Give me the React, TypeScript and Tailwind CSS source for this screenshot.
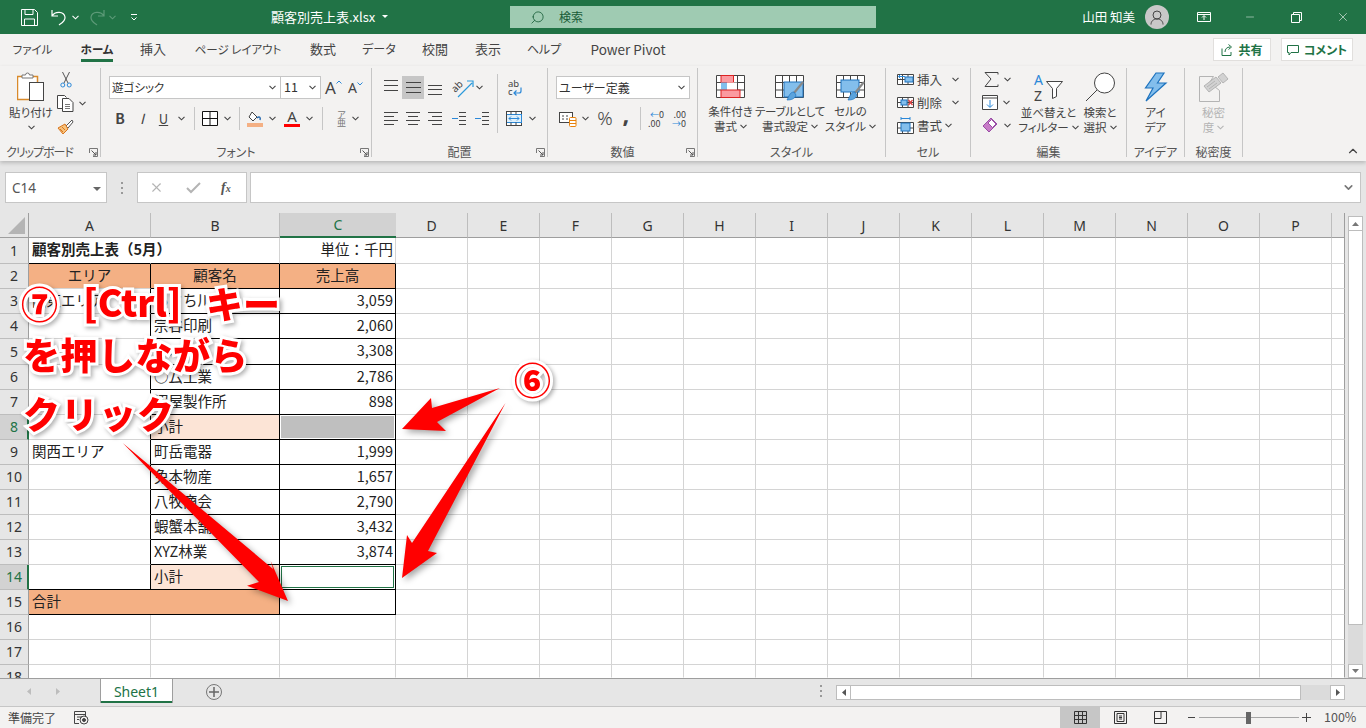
import type { ReactNode } from "react";
import { ChevronDown, ChevronUp, Minus, Search, X } from "lucide-react";

const jp = "font-['Noto_Sans_CJK_JP','Noto_Sans',sans-serif]";
const palt = "[font-feature-settings:'palt']";

const RED = "#ff0000";
const GR = "border-r-[#d4d4d4]";
const BR = "border-r-black";
const NR = "border-r-transparent";
const GB = "border-b-[#d4d4d4]";
const BB = "border-b-black";
const CELL = "flex items-center whitespace-nowrap border-r border-b text-[14.5px] leading-none text-[#222]";
const ORANGE = "bg-[#f4b084]";
const PEACH = "bg-[#fce4d6]";

const cols = ["A", "B", "C", "D", "E", "F", "G", "H", "I", "J", "K", "L", "M", "N", "O", "P"];
const rowNums = Array.from({ length: 18 }, (_, i) => i + 1);

// small chevron used all over the ribbon
function Chev({ color = "#444", className = "" }: { color?: string; className?: string }) {
  return (
    <svg width="7" height="5" viewBox="0 0 7 5" className={`shrink-0 ${className}`}>
      <path d="M.5 .8l3 3 3-3" fill="none" stroke={color} strokeWidth="1.1" />
    </svg>
  );
}

function Launcher() {
  return (
    <svg width="9" height="9" viewBox="0 0 9 9">
      <path d="M.5 5V.5H8.500M8.500 .5V8.500H4" fill="none" stroke="#777" />
      <path d="M2.500 2.500L7 7M7 4v3H4" fill="none" stroke="#555" />
    </svg>
  );
}

function Group({ w, label, launcher, children, labelClass = "" }: { w: string; label: string; launcher?: boolean; children: ReactNode; labelClass?: string }) {
  return (
    <div className={`${w} flex h-[89px] shrink-0 flex-col border-r border-[#c6c6c6]`}>
      <div className="flex h-[78px]">{children}</div>
      <div className="grid h-[11px] grid-cols-[1fr_auto_1fr] items-center">
        <span />
        <span className={`whitespace-nowrap text-[12px] leading-none text-[#555] ${labelClass}`}>{label}</span>
        <span className="flex justify-end pr-[2px]">{launcher && <Launcher />}</span>
      </div>
    </div>
  );
}

function Lines({ rows, w = 15, h = 15 }: { rows: [number, number, number, string?][]; w?: number; h?: number }) {
  return (
    <svg width={w} height={h} viewBox={`0 0 ${w} ${h}`}>
      {rows.map(([a, b, y, c], i) => (
        <path key={i} d={`M${a} ${y + 0.5}H${b}`} stroke={c || "#444"} />
      ))}
    </svg>
  );
}

function Paste() {
  return (
    <svg width="28" height="31" viewBox="0 0 28 31">
      <rect x=".5" y="4.500" width="20" height="23" fill="#fff" stroke="#d98a2b" strokeWidth="1.500" />
      <path d="M5 5V3h3.500a2 2 0 0 1 4 0H16v3H5z" fill="#fff" stroke="#777" />
      <rect x="12.500" y="10.500" width="14" height="18" fill="#fff" stroke="#444" />
    </svg>
  );
}

function Scissors() {
  return (
    <svg width="12" height="17" viewBox="0 0 12 17">
      <path d="M2.500 1L8 12M9.500 1L4 12" stroke="#555" fill="none" />
      <circle cx="2.800" cy="14" r="2" fill="none" stroke="#2b88d8" />
      <circle cx="9.200" cy="14" r="2" fill="none" stroke="#2b88d8" />
    </svg>
  );
}

function Copy() {
  return (
    <svg width="18" height="17" viewBox="0 0 18 17">
      <path d="M7 13.500H.5V.5h7l2 2" fill="#fff" stroke="#444" />
      <path d="M5.500 3.500H12l4 4v9H5.500z" fill="#fff" stroke="#444" />
      <path d="M8 9.500h5M8 11.500h5M8 13.500h5" stroke="#777" />
    </svg>
  );
}

function Brush() {
  return (
    <svg width="17" height="16" viewBox="0 0 17 16">
      <path d="M11 5l-2 2 2 2 5-6-1-2z" fill="#fff" stroke="#555" />
      <path d="M8 5L1 9l5 6 5-5z" fill="#f7c27c" stroke="#d9761e" />
      <path d="M3 10l3 3M5 8l3 3" stroke="#d9761e" />
    </svg>
  );
}

function GrowA({ down, size }: { down?: boolean; size: string }) {
  return (
    <span className="flex items-start text-[#444]">
      <span className={`${size} leading-none font-['Noto_Sans',sans-serif]`}>A</span>
      <svg width="6" height="4" viewBox="0 0 6 4" className="mt-[1px]">
        <path d={down ? "M.5 .5l2.500 2.500 2.500-2.500" : "M.5 3.500l2.500-2.500 2.500 2.500"} fill="none" stroke="#2b88d8" />
      </svg>
    </span>
  );
}

function Fill() {
  return (
    <svg width="16" height="17" viewBox="0 0 16 17">
      <path d="M5 2l5 5-4 4-4-4z" fill="#fff" stroke="#444" />
      <path d="M10 8c2-2 4-1 3 2" fill="none" stroke="#2b6cb0" strokeWidth="1.500" />
      <rect y="13" width="16" height="4" fill="#f4b084" />
    </svg>
  );
}

function FontColor() {
  return (
    <span className="flex h-[17px] w-[16px] flex-col items-center">
      <span className="h-[13px] text-[15px] leading-[13px] text-[#444] font-['Noto_Sans',sans-serif]">A</span>
      <span className="mt-[1px] h-[3px] w-[16px] bg-[#ff0000]" />
    </span>
  );
}

function Orient() {
  return (
    <svg width="22" height="20" viewBox="0 0 22 20" className="overflow-visible">
      <text x="-1" y="11" fontSize="10" fill="#444" transform="rotate(-45 6 8)" fontFamily="Noto Sans">ab</text>
      <path d="M6 19L20 5M15 3h6v6" fill="none" stroke="#2b9adb" strokeWidth="1.200" />
    </svg>
  );
}

function Wrap() {
  return (
    <svg width="16" height="16" viewBox="0 0 16 16" className="overflow-visible">
      <text x="1" y="7" fontSize="9.500" fill="#444" fontFamily="Noto Sans">ab</text>
      <text x="1" y="15" fontSize="9.500" fill="#444" fontFamily="Noto Sans">c</text>
      <path d="M14 7.500V11a2 2 0 0 1-2 2H7M9.500 10.500L7 13l2.500 2.500" fill="none" stroke="#2b88d8" strokeWidth="1.200" />
    </svg>
  );
}

function Merge() {
  return (
    <svg width="16" height="15" viewBox="0 0 16 15">
      <rect x=".5" y=".5" width="15" height="14" fill="#fff" stroke="#444" />
      <rect x=".5" y="3.500" width="15" height="8" fill="#dff0fb" stroke="#2b88d8" />
      <path d="M.5 .5v14M5 .5v3M10 .5v3M5 11.500v3M10 11.500v3" stroke="#444" />
      <path d="M3 7.500h10M5 5.500l-2 2 2 2M11 5.500l2 2-2 2" fill="none" stroke="#2b88d8" />
    </svg>
  );
}

function Currency() {
  return (
    <svg width="18" height="16" viewBox="0 0 18 16">
      <rect x=".5" y="1.500" width="13" height="10" fill="#fff" stroke="#444" />
      <path d="M3 5h2M3 8h2M7 5h2M7 8h2" stroke="#444" />
      <rect x="10.500" y="6.500" width="6.500" height="9" rx="1" fill="#fff" stroke="#e8820c" />
      <path d="M10.500 9.500h6.500M10.500 12.500h6.500" stroke="#e8820c" />
    </svg>
  );
}

function TableIcon({ kind }: { kind: 0 | 1 | 2 }) {
  const grid = "M.5 .5H28.500V22.500H.5zM.5 7.500H28.500M.5 15H28.500M7.500 .5V22.500M14.500 .5V22.500M21.500 .5V22.500";
  return (
    <svg width="30" height="26" viewBox="0 0 30 26">
      <rect width="29" height="23" fill="#fff" />
      <path d={grid} fill="none" stroke="#444" strokeWidth="1" />
      {kind === 0 && (
        <>
          <rect x="5" y=".5" width="12.500" height="7" fill="#fb9aa0" stroke="#d22" />
          <rect x="5" y="7.500" width="6" height="7.500" fill="#83beec" />
          <rect x="11" y="7.500" width="10" height="7.500" fill="#fff" />
          <rect x="5" y="15" width="19" height="7.500" fill="#fb9aa0" stroke="#d22" />
        </>
      )}
      {kind === 1 && <rect x="9" y="7" width="19" height="15" fill="#83beec" stroke="#1e73be" />}
      {kind === 2 && <rect x="5" y="5" width="18" height="12" fill="#83beec" stroke="#1e73be" />}
      {kind !== 0 && (
        <>
          <path d="M28 7L19 18" stroke="#888" strokeWidth="2.200" />
          <path d="M19 17c-4 0-5 4-7 8 4 0 8-1 9-5z" fill="#5ba3dd" stroke="#1e73be" strokeWidth=".7" />
        </>
      )}
    </svg>
  );
}

function CellIcon({ kind }: { kind: 0 | 1 | 2 }) {
  return (
    <svg width="17" height="17" viewBox="0 0 17 17">
      {kind !== 2 && <path d="M.5 3.500h16v10H.5zM.5 8.500h16M5.500 3.500v10M11 3.500v10" fill="#fff" stroke="#444" />}
      {kind === 0 && (
        <>
          <rect x="8" y="6" width="8" height="5" fill="#83beec" stroke="#1e73be" />
          <path d="M8 5.500H1.500M3.500 3.500l-2 2 2 2" fill="none" stroke="#2b88d8" />
        </>
      )}
      {kind === 1 && (
        <>
          <rect x="4" y="6" width="6" height="5" fill="#83beec" stroke="#1e73be" />
          <path d="M11.500 6l4 5M15.500 6l-4 5" stroke="#e04343" strokeWidth="1.300" />
        </>
      )}
      {kind === 2 && (
        <>
          <path d="M.5 5.500h16v11H.5zM.5 11h16M5.500 5.500v11M11 5.500v11" fill="#fff" stroke="#444" />
          <rect x="4" y="6" width="9" height="8" fill="#83beec" stroke="#1e73be" />
          <path d="M4 1.500h9M4 0v3M13 0v3" stroke="#2b88d8" />
        </>
      )}
    </svg>
  );
}

function SortFilter() {
  return (
    <svg width="30" height="30" viewBox="0 0 30 30" className="overflow-visible">
      <text x="0" y="13" fontSize="14" fill="#2b88d8" fontFamily="Noto Sans">A</text>
      <text x="0" y="29" fontSize="14" fill="#444" fontFamily="Noto Sans">Z</text>
      <path d="M12.500 9.500h16l-6 7v8l-4 2v-10z" fill="#fff" stroke="#444" />
    </svg>
  );
}

function Bulb() {
  return (
    <svg width="24" height="30" viewBox="0 0 24 30">
      <path d="M12 1L1.500 16H9L2 29 22 11h-8.500L20 1z" fill="#83beec" stroke="#1e73be" strokeWidth="1.200" />
    </svg>
  );
}

function Sensitivity() {
  return (
    <svg width="30" height="30" viewBox="0 0 30 30" fill="none" stroke="#b4b4b4">
      <path d="M.5 4.500h14l-4 6 10 8v11H.5z" fill="#f3f2f1" />
      <path d="M5 14l12-9 5 6-12 9z" fill="#d2d2d2" />
      <path d="M8 15l8-6M10 17l8-6" />
      <path d="M19 5l5-4 5 6-5 4z" fill="#d2d2d2" />
    </svg>
  );
}

function Ribbon() {
  return (
    <div className={`${palt} relative z-10 flex h-[95px] bg-[#f3f2f1] pt-[2px] shadow-[0_2px_4px_rgba(0,0,0,0.2)]`}>
      {/* clipboard */}
      <Group w="w-[101px]" label="クリップボード" launcher labelClass="mr-[16px] text-[11px] tracking-[-1px]">
        <div className="flex w-[57px] flex-col items-center pl-[5px] pt-[4px] text-[11.500px] leading-[15px] text-[#444]">
          <Paste />
          <span className="mt-[2px] whitespace-nowrap">貼り付け</span>
          <Chev className="mt-[5px]" />
        </div>
        <div className="flex flex-col pt-[3px]">
          <span className="ml-[3px]"><Scissors /></span>
          <span className="mt-[7px] flex items-center"><Copy /><Chev className="ml-[4px]" /></span>
          <span className="mt-[7px]"><Brush /></span>
        </div>
      </Group>

      {/* font */}
      <Group w="w-[271px]" label="フォント" launcher labelClass="text-[11.500px]">
        <div className="flex flex-col pl-[8px] pt-[8px]">
          <div className="flex h-[23px] items-center">
            <div className="flex h-[23px] w-[172px] items-center justify-between border border-[#c6c6c6] bg-white pl-[2px] pr-[4px] text-[11.500px] text-[#333]">
              遊ゴシック
              <Chev />
            </div>
            <div className="flex h-[23px] w-[40px] items-center justify-between border border-l-0 border-[#c6c6c6] bg-white pl-[3px] pr-[4px] text-[12.500px] text-[#333]">
              11
              <Chev />
            </div>
            <span className="ml-[4px]"><GrowA size="text-[17px]" /></span>
            <span className="ml-[6px]"><GrowA down size="text-[14px]" /></span>
          </div>
          <div className="mt-[8px] flex h-[23px] items-center text-[#444]">
            <span className="w-[22px] text-center text-[14px] font-bold">B</span>
            <span className="w-[22px] text-center text-[14px] italic">I</span>
            <span className="w-[21px] text-center text-[13px] underline">U</span>
            <Chev className="ml-[4px]" />
            <span className="ml-[9px] h-[23px] border-l border-[#c6c6c6]" />
            <svg width="16" height="15" viewBox="0 0 16 15" className="ml-[7px]">
              <path d="M.5 .5h15v14H.5zM8 .5v14M.5 7.500h15" fill="#fff" stroke="#111" />
            </svg>
            <Chev className="ml-[6px]" />
            <span className="ml-[8px] h-[23px] border-l border-[#c6c6c6]" />
            <span className="ml-[7px]"><Fill /></span>
            <Chev className="ml-[6px]" />
            <span className="ml-[8px]"><FontColor /></span>
            <Chev className="ml-[6px]" />
            <span className="ml-[9px] h-[23px] border-l border-[#c6c6c6]" />
            <span className="ml-[11px] flex w-[15px] flex-col items-center text-[9px] leading-[8px] text-[#777]">
              <span>ア</span>
              <span>亜</span>
            </span>
            <Chev className="ml-[3px]" />
          </div>
        </div>
      </Group>

      {/* alignment */}
      <Group w="w-[176px]" label="配置" launcher>
        <div className="mt-[6px] h-[59px] w-[126px] border-r border-[#c6c6c6] pl-[8px] pt-[2px]">
          <div className="flex h-[23px] items-center">
            <span className="flex h-[23px] w-[22px] justify-center pt-[3px]"><Lines rows={[[0, 14, 1], [0, 14, 6], [0, 14, 11]]} /></span>
            <span className="flex h-[23px] w-[22px] justify-center bg-[#c6c6c6] pt-[5px]"><Lines rows={[[0, 15, 1], [0, 15, 6], [0, 15, 11]]} /></span>
            <span className="flex h-[23px] w-[22px] justify-center pt-[9px]"><Lines h={13} rows={[[0, 14, 0], [0, 14, 4], [0, 14, 9]]} /></span>
            <span className="ml-[6px]"><Orient /></span>
            <Chev className="ml-[2px]" />
          </div>
          <div className="mt-[8px] flex h-[23px] items-center">
            <span className="flex w-[22px] justify-center pt-[2px]"><Lines rows={[[0, 14, 0], [0, 10, 4], [0, 14, 8], [0, 10, 12]]} /></span>
            <span className="flex w-[22px] justify-center pt-[2px]"><Lines rows={[[0, 14, 0], [2, 12, 4], [0, 14, 8], [2, 12, 12]]} /></span>
            <span className="flex w-[22px] justify-center pt-[2px]"><Lines rows={[[0, 14, 0], [4, 14, 4], [0, 14, 8], [4, 14, 12]]} /></span>
            <span className="ml-[6px] flex pt-[2px]">
              <Lines rows={[[7, 14, 0], [7, 14, 4], [7, 14, 8], [7, 14, 12], [0, 6, 6, "#2b88d8"]]} />
            </span>
            <span className="ml-[8px] flex pt-[2px]">
              <Lines rows={[[7, 14, 0], [7, 14, 4], [7, 14, 8], [7, 14, 12], [0, 6, 6, "#2b88d8"]]} />
            </span>
          </div>
        </div>
        <div className="flex flex-col pl-[8px] pt-[12px]">
          <span className="ml-[1px] h-[23px]"><Wrap /></span>
          <span className="mt-[8px] flex items-center"><Merge /><Chev className="ml-[7px]" /></span>
        </div>
      </Group>

      {/* number */}
      <Group w="w-[150px]" label="数値" launcher>
        <div className="flex flex-col pl-[8px] pt-[8px]">
          <div className="flex h-[23px] w-[134px] items-center justify-between border border-[#c6c6c6] bg-white pl-[2px] pr-[4px] text-[12px] text-[#333]">
            ユーザー定義
            <Chev />
          </div>
          <div className="mt-[8px] flex h-[23px] items-center text-[#444]">
            <span className="ml-[3px]"><Currency /></span>
            <Chev className="ml-[5px]" />
            <span className="ml-[7px] w-[18px] text-center text-[19px] font-light leading-none font-['Noto_Sans',sans-serif]">%</span>
            <span className="ml-[7px] -mt-[10px] w-[10px] text-center text-[24px] font-bold leading-[14px] font-['Noto_Sans',sans-serif]">,</span>
            <span className="ml-[9px] h-[23px] border-l border-[#c6c6c6]" />
            <span className="ml-[7px] flex w-[16px] flex-col text-[9px] leading-[9px]">
              <span className="text-right"><span className="text-[#2b88d8]">←</span>0</span>
              <span>.00</span>
            </span>
            <span className="ml-[6px] flex w-[16px] flex-col text-[9px] leading-[9px]">
              <span className="text-right">.00</span>
              <span className="text-right"><span className="text-[#2b88d8]">→</span>0</span>
            </span>
          </div>
        </div>
      </Group>

      {/* styles */}
      <Group w="w-[188px]" label="スタイル" labelClass="text-[11.500px]">
        <div className="flex pl-[3px] pt-[7px] text-[11.500px] leading-[15px] text-[#444]">
          <div className="flex w-[59px] flex-col items-center">
            <TableIcon kind={0} />
            <span className="mt-[3px] whitespace-nowrap">条件付き</span>
            <span className="flex items-center gap-[3px] whitespace-nowrap">書式<Chev /></span>
          </div>
          <div className="flex w-[60px] flex-col items-center">
            <TableIcon kind={1} />
            <span className="mt-[3px] whitespace-nowrap tracking-[-0.3px]">テーブルとして</span>
            <span className="flex items-center gap-[3px] whitespace-nowrap">書式設定<Chev /></span>
          </div>
          <div className="flex w-[61px] flex-col items-center">
            <TableIcon kind={2} />
            <span className="mt-[3px] whitespace-nowrap">セルの</span>
            <span className="flex items-center gap-[3px] whitespace-nowrap">スタイル<Chev /></span>
          </div>
        </div>
      </Group>

      {/* cells */}
      <Group w="w-[85px]" label="セル">
        <div className="flex flex-col pl-[11px] text-[12.500px] leading-[23px] text-[#444]">
          <span className="flex h-[23px] items-center"><CellIcon kind={0} /><span className="ml-[3px] w-[26px]">挿入</span><Chev className="ml-[9px]" /></span>
          <span className="flex h-[23px] items-center"><CellIcon kind={1} /><span className="ml-[3px] w-[26px]">削除</span><Chev className="ml-[9px]" /></span>
          <span className="flex h-[23px] items-center"><CellIcon kind={2} /><span className="ml-[3px] w-[26px]">書式</span><Chev className="ml-[2px]" /></span>
        </div>
      </Group>

      {/* editing */}
      <Group w="w-[156px]" label="編集">
        <div className="flex w-[50px] flex-col pl-[11px]">
          <span className="flex h-[23px] items-center">
            <svg width="15" height="15" viewBox="0 0 15 15" className="ml-[2px]"><path d="M14 2.500V.5H1l6 6.500-6 7.500h13v-2" fill="none" stroke="#444" /></svg>
            <Chev className="ml-[5px]" />
          </span>
          <span className="flex h-[23px] items-center">
            <svg width="16" height="15" viewBox="0 0 16 15"><path d="M.5 .5h15v14H.5zM.5 3h15" fill="#fff" stroke="#444" /><path d="M8 5v7M5 9.500L8 12.500l3-3" fill="none" stroke="#2b88d8" /></svg>
            <Chev className="ml-[5px]" />
          </span>
          <span className="flex h-[23px] items-center">
            <svg width="16" height="15" viewBox="0 0 16 15"><path d="M1 8l6 6 8-8-6-6z" fill="#c77cc7" stroke="#9a4ea6" /><path d="M9.500 1.500l4.500 4.500-3.500 3.500-4.500-4.500z" fill="#fff" stroke="#9a4ea6" /></svg>
            <Chev className="ml-[6px]" />
          </span>
        </div>
        <div className="flex w-[55px] flex-col items-center pt-[4px] text-[11.500px] leading-[15px] text-[#444]">
          <SortFilter />
          <span className="mt-[3px] whitespace-nowrap">並べ替えと</span>
          <span className="flex items-center gap-[3px] whitespace-nowrap">フィルター<Chev /></span>
        </div>
        <div className="ml-[2px] flex w-[44px] flex-col items-center pt-[4px] text-[11.500px] leading-[15px] text-[#444]">
          <svg width="31" height="30" viewBox="0 0 31 30">
            <circle cx="19.500" cy="11" r="10" fill="#fff" stroke="#444" />
            <path d="M12 18L1 29" stroke="#444" />
          </svg>
          <span className="mt-[3px] whitespace-nowrap">検索と</span>
          <span className="flex items-center gap-[3px] whitespace-nowrap">選択<Chev /></span>
        </div>
      </Group>

      {/* ideas */}
      <Group w="w-[58px]" label="アイデア" labelClass="text-[11.500px]">
        <div className="flex w-full flex-col items-center pt-[4px] text-[11.500px] leading-[15px] text-[#444]">
          <Bulb />
          <span className="mt-[3px]">アイ</span>
          <span>デア</span>
        </div>
      </Group>

      {/* sensitivity */}
      <Group w="w-[58px]" label="秘密度">
        <div className="flex w-full flex-col items-center pt-[4px] text-[11.500px] leading-[15px] text-[#b4b4b4]">
          <Sensitivity />
          <span className="mt-[3px]">秘密</span>
          <span className="flex items-center gap-[3px]">度<Chev color="#b4b4b4" /></span>
        </div>
      </Group>

      <div className="flex flex-1 items-end justify-end pb-[3px] pr-[6px]">
        <ChevronUp size={14} className="text-[#444]" />
      </div>
    </div>
  );
}

function TitleBar() {
  return (
    <div className="flex h-[34px] items-center bg-[#217346] text-white">
      <div className="flex w-[271px] items-center pl-[21px]">
        <svg width="17" height="17" viewBox="0 0 17 17" fill="none" stroke="#fff">
          <path d="M.5 .5h13l3 3v13H.5z" />
          <path d="M4 .5v5h8v-5M3.500 16.500V10h10v6.500" />
        </svg>
        <svg width="16" height="17" viewBox="0 0 16 17" fill="none" stroke="#fff" strokeWidth="1.200" className="ml-[13px]">
          <path d="M1 1v6h6M1 7c3-5 12-5 13 1 .5 4-3 6-6 8" />
        </svg>
        <Chev color="#fff" className="ml-[5px]" />
        <svg width="16" height="17" viewBox="0 0 16 17" fill="none" stroke="#5d9a78" strokeWidth="1.200" className="ml-[10px]">
          <path d="M15 1v6H9M15 7C12 2 3 2 2 8c-.5 4 3 6 6 8" />
        </svg>
        <Chev color="#5d9a78" className="ml-[4px]" />
        <svg width="8" height="8" viewBox="0 0 8 8" className="ml-[14px]" fill="none" stroke="#fff">
          <path d="M1 1.500h6M1.500 4.500L4 7l2.500-2.500" />
        </svg>
      </div>
      <div className="flex w-[239px] items-center text-[13px]">
        <span>顧客別売上表.xlsx</span>
        <svg width="6" height="4" viewBox="0 0 6 4" className="ml-[7px]"><path d="M0 0h6L3 3z" fill="#fff" /></svg>
      </div>
      <div className="flex h-[22px] w-[366px] items-center bg-[#9fcbb2] pl-[20px] text-[12px] text-[#185c37]">
        <Search size={15} strokeWidth={1.300} className="-scale-x-100" />
        <span className="ml-[14px]">検索</span>
      </div>
      <div className="flex flex-1 items-center justify-end">
        <span className="text-[12.500px]">山田 知美</span>
        <span className="ml-[10px] flex h-[24px] w-[24px] items-center justify-center rounded-full bg-[#c8c8c8]">
          <svg width="14" height="15" viewBox="0 0 14 15" fill="none" stroke="#444">
            <circle cx="7" cy="5" r="4" />
            <path d="M1 14.500c0-3 2-5.500 6-5.500s6 2.500 6 5.500" />
          </svg>
        </span>
        <svg width="14" height="10" viewBox="0 0 14 10" fill="none" stroke="#fff" className="ml-[28px]">
          <path d="M.5 .5h13v9H.5zM.5 2.500h13M7 8V4M5 5.500L7 3.500l2 2" />
        </svg>
        <Minus size={12} strokeWidth={1} className="ml-[33px]" />
        <svg width="11" height="11" viewBox="0 0 11 11" fill="none" stroke="#fff" className="ml-[35px]">
          <path d="M.5 2.500h8v8h-8zM2.500 2.500v-2h8v8h-2" />
        </svg>
        <X size={14} strokeWidth={1} className="ml-[34px] mr-[16px]" />
      </div>
    </div>
  );
}

function Tabs() {
  const tabs = [
    ["ファイル", "w-[65px] text-[11.500px]"],
    ["ホーム", "w-[64px] text-[11.500px]"],
    ["挿入", "w-[48px] text-[13px]"],
    ["ページ レイアウト", "w-[122px] text-[11.500px]"],
    ["数式", "w-[48px] text-[13px]"],
    ["データ", "w-[64px] text-[12px]"],
    ["校閲", "w-[48px] text-[13px]"],
    ["表示", "w-[58px] text-[13px]"],
    ["ヘルプ", "w-[54px] text-[12px]"],
    ["Power Pivot", "w-[114px] text-[13.500px]"],
  ];
  return (
    <div className={`${palt} flex h-[32px] bg-[#f3f2f1] text-[#444]`}>
      {tabs.map(([t, w]) => (
        <div key={t} className={`${w} flex justify-center pt-[6px]`}>
          <span className={t === "ホーム" ? "h-[22px] border-b-[3px] border-[#217346] font-bold leading-[18px] text-[#333]" : "leading-[18px]"}>{t}</span>
        </div>
      ))}
      <div className="flex flex-1 items-start justify-end gap-[10px] pr-[13px] pt-[4px] text-[12px] font-bold text-[#217346]">
        <div className="flex h-[23px] w-[58px] items-center justify-center gap-[5px] border border-[#e1dfdd] bg-white">
          <svg width="12" height="12" viewBox="0 0 12 12" fill="none" stroke="#217346">
            <path d="M1 4.500v7h9V8M4 8c0-3 2-5 5-5M7.500 .5L10.500 3 7.500 5.500" />
          </svg>
          共有
        </div>
        <div className="flex h-[23px] w-[72px] items-center justify-center gap-[5px] border border-[#e1dfdd] bg-white">
          <svg width="12" height="12" viewBox="0 0 12 12" fill="none" stroke="#217346">
            <path d="M.5 1.500h11v7H4L2 11V8.500H.5z" />
          </svg>
          コメント
        </div>
      </div>
    </div>
  );
}

function FormulaBar() {
  return (
    <div className="flex h-[52px] bg-[#e6e6e6] pl-[5px] pt-[11px]">
      <div className="flex h-[31px] w-[102px] items-center justify-between border border-[#c6c6c6] bg-white pl-[6px] pr-[5px] pt-[2px] text-[13.500px] text-[#555] font-['Noto_Sans',sans-serif]">
        C14
        <svg width="8" height="4" viewBox="0 0 8 4"><path d="M0 0h8L4 4z" fill="#666" /></svg>
      </div>
      <div className="flex h-[31px] w-[30px] flex-col items-center justify-center gap-[3px]">
        <span className="h-[2px] w-[2px] bg-[#999]" />
        <span className="h-[2px] w-[2px] bg-[#999]" />
        <span className="h-[2px] w-[2px] bg-[#999]" />
      </div>
      <div className="flex h-[31px] w-[110px] items-center border border-[#c6c6c6] bg-white text-[#b4b4b4]">
        <X size={15} strokeWidth={1.800} className="ml-[11px]" />
        <svg width="15" height="12" viewBox="0 0 15 12" fill="none" stroke="#b4b4b4" strokeWidth="2" className="ml-[22px]"><path d="M1 6l4 4 9-9" /></svg>
        <span className="ml-[20px] font-['Liberation_Serif',serif] text-[14px] font-bold italic text-[#555]">f<span className="text-[10px]">x</span></span>
      </div>
      <div className="ml-[3px] flex h-[31px] w-[1111px] items-center justify-end border border-[#c6c6c6] bg-white pr-[5px]">
        <ChevronDown size={13} strokeWidth={3} className="text-[#777]" />
      </div>
    </div>
  );
}

function Sheet() {
  // table cells A-C, keyed by row number
  const left = "pl-[3px] pb-[2px]";
  const right = "justify-end pr-[2px] pb-[2px]";
  const center = "justify-center pb-[2px]";
  const table: Record<number, ReactNode[]> = {
    1: [
      <div key="a" className={`${CELL} ${NR} ${BB} ${left} font-bold`}>顧客別売上表（5月）</div>,
      <div key="b" className={`${CELL} ${GR} ${BB}`} />,
      <div key="c" className={`${CELL} ${GR} ${BB} ${right} bg-white`}>単位：千円</div>,
    ],
    2: [
      <div key="a" className={`${CELL} ${BR} ${GB} ${center} ${ORANGE}`}>エリア</div>,
      <div key="b" className={`${CELL} ${BR} ${BB} ${center} ${ORANGE}`}>顧客名</div>,
      <div key="c" className={`${CELL} ${BR} ${BB} ${center} ${ORANGE}`}>売上高</div>,
    ],
  };
  const body: [number, string, string, string][] = [
    [3, "関東エリア", "あさち川堂", "3,059"],
    [4, "", "宗谷印刷", "2,060"],
    [5, "", "ACC商事", "3,308"],
    [6, "", "○厶工業", "2,786"],
    [7, "", "沼屋製作所", "898"],
    [9, "関西エリア", "町岳電器", "1,999"],
    [10, "", "兔本物産", "1,657"],
    [11, "", "八牧商会", "2,790"],
    [12, "", "蝦蟹本舗", "3,432"],
    [13, "", "XYZ林業", "3,874"],
  ];
  body.forEach(([r, a, b, c]) => {
    table[r] = [
      <div key="a" className={`${CELL} ${BR} ${GB} ${left} bg-white`}>{a}</div>,
      <div key="b" className={`${CELL} ${BR} ${BB} ${left} bg-white`}>{b}</div>,
      <div key="c" className={`${CELL} ${BR} ${BB} ${right} bg-white`}>{c}</div>,
    ];
  });
  table[8] = [
    <div key="a" className={`${CELL} ${BR} ${GB} bg-white`} />,
    <div key="b" className={`${CELL} ${BR} ${BB} ${left} ${PEACH}`}>小計</div>,
    <div key="c" className={`${CELL} ${BR} ${BB} bg-white p-[1px]`}>
      <div className="h-full w-full bg-[#bfbfbf]" />
    </div>,
  ];
  table[14] = [
    <div key="a" className={`${CELL} ${BR} ${BB} bg-white`} />,
    <div key="b" className={`${CELL} ${BR} ${BB} ${left} ${PEACH}`}>小計</div>,
    <div key="c" className={`${CELL} ${BR} ${BB} bg-white p-[1px]`}>
      <div className="h-full w-full border border-[#217346]" />
    </div>,
  ];
  table[15] = [
    <div key="a" className={`${CELL} ${BR} ${BB} ${left} ${ORANGE} col-span-2`}>合計</div>,
    <div key="c" className={`${CELL} ${BR} ${BB} bg-white`} />,
  ];

  return (
    <div className="grid h-[465px] w-[1345px] grid-cols-[29px_122px_129px_116px_repeat(13,72px)_13px] grid-rows-[25px_26px_25px_25px_25px_26px_25px_25px_25px_25px_25px_25px_25px_25px_25px_25px_25px_25px_13px] overflow-hidden bg-white">
      {/* corner */}
      <div className="flex items-end justify-end border-r border-b border-[#9e9e9e] bg-[#e6e6e6] pb-[3px] pr-[3px]">
        <svg width="17" height="17" viewBox="0 0 17 17"><path d="M17 0v17H0z" fill="#b4b4b4" /></svg>
      </div>
      {cols.map((c) => (
        <div
          key={c}
          className={
            c === "C"
              ? "flex items-center justify-center border-b-2 border-[#217346] bg-[#d2d2d2] text-[14px] text-[#217346] font-['Noto_Sans',sans-serif]"
              : "flex items-center justify-center border-r border-b border-r-[#bdbdbd] border-b-[#9e9e9e] bg-[#e6e6e6] text-[14px] text-[#333] font-['Noto_Sans',sans-serif]"
          }
        >
          {c}
        </div>
      ))}
      <div className="border-r border-b border-r-[#9e9e9e] border-b-[#9e9e9e] bg-[#e6e6e6]" />

      {rowNums.map((r) => {
        const selected = r === 8 || r === 14;
        const cells = table[r];
        const last = r === 18;
        return (
          <div key={r} className="contents">
            <div
              className={
                selected
                  ? "flex items-center justify-center border-r-2 border-b border-r-[#217346] border-b-[#bdbdbd] bg-[#d2d2d2] pl-[1px] pb-[1px] text-[14px] text-[#217346] font-['Noto_Sans',sans-serif]"
                  : last
                    ? "flex items-start justify-center overflow-hidden border-r border-r-[#9e9e9e] bg-[#e6e6e6] pt-[2px] text-[14px] leading-[20px] text-[#333] font-['Noto_Sans',sans-serif]"
                    : "flex items-center justify-center border-r border-b border-r-[#9e9e9e] border-b-[#bdbdbd] bg-[#e6e6e6] pb-[1px] text-[14px] text-[#333] font-['Noto_Sans',sans-serif]"
              }
            >
              {r}
            </div>
            {cells ?? (
              <>
                <div className={`${CELL} ${GR} ${last ? "border-b-transparent" : GB}`} />
                <div className={`${CELL} ${GR} ${last ? "border-b-transparent" : GB}`} />
                <div className={`${CELL} ${GR} ${last ? "border-b-transparent" : GB}`} />
              </>
            )}
            {cols.slice(3).map((c) => (
              <div key={c} className={`${CELL} ${GR} ${last ? "border-b-transparent" : GB}`} />
            ))}
            <div className={`border-r border-b border-r-[#9e9e9e] ${last ? "border-b-transparent" : GB}`} />
          </div>
        );
      })}
    </div>
  );
}

function VScroll() {
  return (
    <div className="flex h-[465px] w-[21px] flex-col bg-[#e6e6e6] pl-[3px] pr-[3px] pt-[3px]">
      <div className="flex h-[15px] items-center justify-center border border-[#bdbdbd] bg-white">
        <svg width="7" height="4" viewBox="0 0 7 4"><path d="M0 4h7L3.500 0z" fill="#777" /></svg>
      </div>
      <div className="h-[394px] border-x border-b border-[#bdbdbd] bg-white" />
      <div className="flex-1 bg-[#dbdbdb]" />
      <div className="flex h-[14px] items-center justify-center border border-[#bdbdbd] bg-white">
        <svg width="7" height="4" viewBox="0 0 7 4"><path d="M0 0h7L3.500 4z" fill="#777" /></svg>
      </div>
    </div>
  );
}

function TabBar() {
  return (
    <div className="flex h-[28px] border-t border-[#9e9e9e] bg-[#e6e6e6]">
      <div className="flex w-[100px] items-center pb-[3px] pl-[27px]">
        <svg width="4" height="7" viewBox="0 0 4 7"><path d="M4 0v7L0 3.500z" fill="#bdbdbd" /></svg>
        <svg width="4" height="7" viewBox="0 0 4 7" className="ml-[25px]"><path d="M0 0v7l4-3.500z" fill="#bdbdbd" /></svg>
      </div>
      <div className="-mt-[1px] flex h-[25px] w-[73px] items-center justify-center border-x border-t border-[#9e9e9e] bg-white text-[14px] text-[#217346] shadow-[inset_0_-2px_0_#217346] font-['Noto_Sans',sans-serif]">
        Sheet1
      </div>
      <div className="ml-[33px] mt-[5px] flex h-[16px] w-[16px] items-center justify-center rounded-full border border-[#777]">
        <svg width="10" height="10" viewBox="0 0 10 10"><path d="M5 0v10M0 5h10" stroke="#666" strokeWidth="1.500" /></svg>
      </div>
      <div className="ml-[598px] flex flex-col justify-center gap-[3px] pb-[3px]">
        <span className="h-[2px] w-[2px] bg-[#999]" />
        <span className="h-[2px] w-[2px] bg-[#999]" />
        <span className="h-[2px] w-[2px] bg-[#999]" />
      </div>
      <div className="ml-[14px] mt-[6px] flex h-[15px] w-[509px]">
        <div className="flex w-[15px] items-center justify-center border border-[#bdbdbd] bg-white">
          <svg width="4" height="7" viewBox="0 0 4 7"><path d="M4 0v7L0 3.500z" fill="#555" /></svg>
        </div>
        <div className="w-[450px] border-y border-r border-[#bdbdbd] bg-white" />
        <div className="flex-1 bg-[#dbdbdb]" />
        <div className="flex w-[15px] items-center justify-center border border-[#bdbdbd] bg-white">
          <svg width="4" height="7" viewBox="0 0 4 7"><path d="M0 0v7l4-3.500z" fill="#555" /></svg>
        </div>
      </div>
    </div>
  );
}

function StatusBar() {
  return (
    <div className="flex h-[22px] items-center border-t border-[#c6c6c6] bg-[#f3f2f1] text-[12px] text-[#444]">
      <span className="ml-[8px]">準備完了</span>
      <svg width="15" height="14" viewBox="0 0 15 14" fill="none" stroke="#444" className="ml-[18px]">
        <path d="M5 12.500H.5V.5h11v5M.5 3.500h11M3 6h5M3 8.500h2" />
        <circle cx="10" cy="9" r="4" />
        <circle cx="10" cy="9" r="1.500" fill="#444" />
      </svg>
      <div className="ml-[971px] flex h-[21px] w-[40px] items-center justify-center bg-[#c6c6c6]">
        <svg width="13" height="13" viewBox="0 0 13 13" fill="none" stroke="#333"><path d="M.5 .5h12v12H.5zM4.500 .5v12M8.500 .5v12M.5 4.500h12M.5 8.500h12" /></svg>
      </div>
      <svg width="13" height="13" viewBox="0 0 13 13" fill="none" stroke="#333" className="ml-[14px]"><path d="M.5 .5h12v12H.5zM3 2.500h7v8H3zM5 5h3M5 6.500h3M5 8h3" /></svg>
      <svg width="13" height="13" viewBox="0 0 13 13" fill="none" stroke="#333" className="ml-[27px]"><path d="M.5 .5h12v12H.5zM.5 7.500h6.500V.5" /></svg>
      <span className="ml-[21px] h-[1px] w-[7px] bg-[#444]" />
      <div className="ml-[4px] flex h-[12px] w-[100px] items-center">
        <span className="h-[1px] w-[47px] bg-[#a6a6a6]" />
        <span className="h-[12px] w-[5px] bg-[#666]" />
        <span className="h-[1px] w-[48px] bg-[#a6a6a6]" />
      </div>
      <svg width="9" height="9" viewBox="0 0 9 9" className="ml-[3px]"><path d="M4.500 0v9M0 4.500h9" stroke="#444" /></svg>
      <span className="ml-[13px] text-[12.500px] text-[#555]">100%</span>
    </div>
  );
}

// red annotations painted over the sheet
function Annotations() {
  const stroke = "text-[#ff0000] font-black leading-none whitespace-nowrap [paint-order:stroke_fill] [-webkit-text-stroke:6px_white] [filter:drop-shadow(2px_2px_2px_rgba(0,0,0,0.3))]";
  return (
    <>
      <svg width="1366" height="728" viewBox="0 0 1366 728" className="pointer-events-none absolute inset-0 [filter:drop-shadow(3px_3px_3px_rgba(0,0,0,0.35))]">
        <polygon fill={RED} points="500,388 432,408 431,398 402,429 446,431 437,422" />
        <polygon fill={RED} points="505.500,403 412,543 407,535 402,578 437,553 428,551" />
        <polygon fill={RED} points="122.700,443 273,569 270.700,561 288,601 247,585.700 259,582" />
      </svg>
      <span className={`${stroke} absolute left-[21px] top-[285px] text-[37px]`}>⑦</span>
      <span className={`${stroke} absolute left-[83px] top-[283px] text-[37px]`}>[Ctrl]</span>
      <span className={`${stroke} absolute left-[206px] top-[285px] text-[37px]`}>キー</span>
      <span className={`${stroke} absolute left-[23px] top-[336px] text-[37px] tracking-[0.5px]`}>を押しながら</span>
      <span className={`${stroke} absolute left-[23px] top-[395px] text-[37px] tracking-[1px]`}>クリック</span>
      <span className={`${stroke} absolute left-[514px] top-[361px] text-[37px]`}>⑥</span>
    </>
  );
}

export default function App() {
  return (
    <div className={`${jp} relative h-[728px] w-[1366px] overflow-hidden bg-[#e6e6e6]`}>
      <TitleBar />
      <Tabs />
      <Ribbon />
      <FormulaBar />
      <div className="flex">
        <Sheet />
        <VScroll />
      </div>
      <TabBar />
      <StatusBar />
      <Annotations />
    </div>
  );
}
